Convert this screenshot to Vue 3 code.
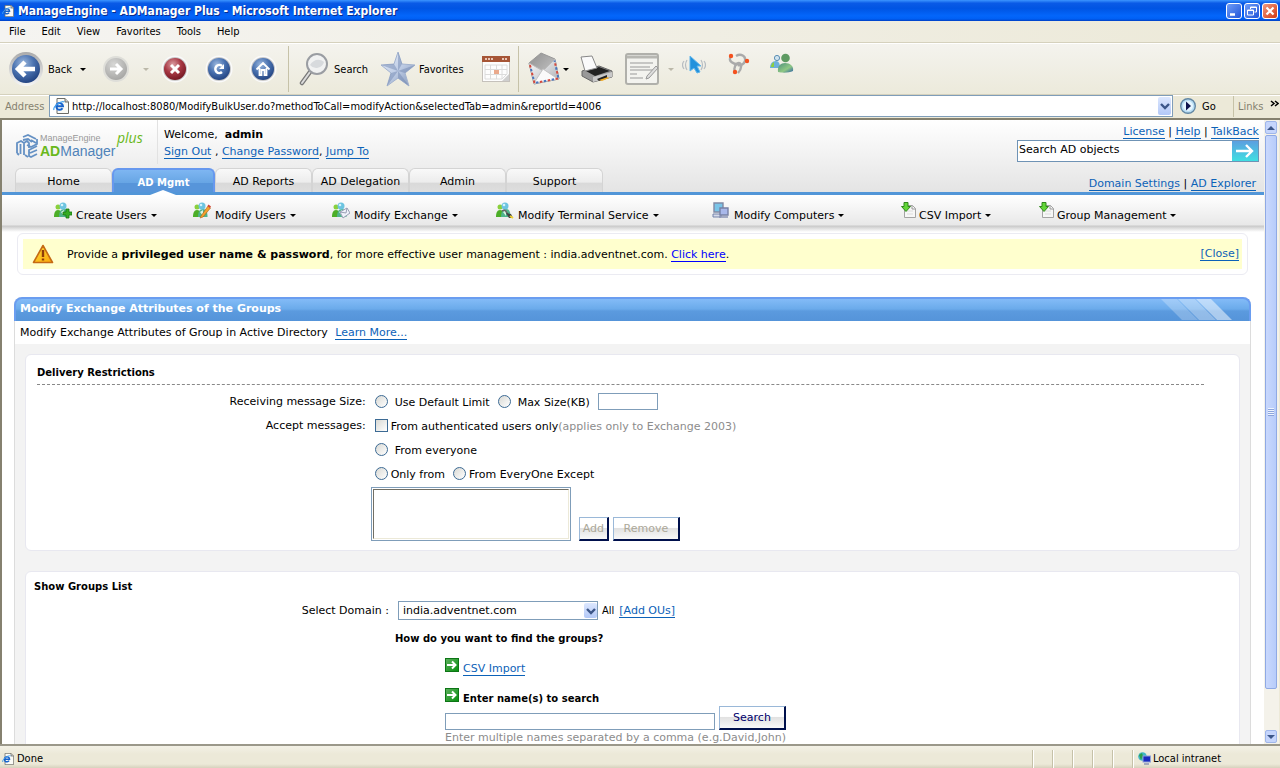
<script setup>
import { ref } from 'vue'

const menus = ['File', 'Edit', 'View', 'Favorites', 'Tools', 'Help']
const tabs = ['Home', 'AD Mgmt', 'AD Reports', 'AD Delegation', 'Admin', 'Support']
const activeTab = ref('AD Mgmt')
const navItems = [
  { label: 'Create Users', icon: 'plus' },
  { label: 'Modify Users', icon: 'pencil' },
  { label: 'Modify Exchange', icon: 'mail' },
  { label: 'Modify Terminal Service', icon: 'plug' },
  { label: 'Modify Computers', icon: 'computer' },
  { label: 'CSV Import', icon: 'import' },
  { label: 'Group Management', icon: 'import' }
]
const showNotice = ref(true)
const address = ref('http://localhost:8080/ModifyBulkUser.do?methodToCall=modifyAction&selectedTab=admin&reportId=4006')
const adSearch = ref('Search AD objects')
const sizeLimit = ref('')
const maxSize = ref('')
const authOnly = ref(false)
const acceptFrom = ref('')
const domain = ref('india.adventnet.com')
const names = ref('')
</script>

<template>
  <div class="window">
    <!-- shared gradients and symbols -->
    <svg class="sprite" aria-hidden="true">
      <defs>
        <radialGradient id="gBlue" cx=".4" cy=".3" r=".75"><stop offset="0" stop-color="#9db9de" /><stop offset=".5" stop-color="#4a72b0" /><stop offset="1" stop-color="#1f3f7d" /></radialGradient>
        <radialGradient id="gRed" cx=".4" cy=".3" r=".75"><stop offset="0" stop-color="#dba0a4" /><stop offset=".5" stop-color="#a83844" /><stop offset="1" stop-color="#701520" /></radialGradient>
        <radialGradient id="gGrey" cx=".4" cy=".3" r=".75"><stop offset="0" stop-color="#d8d8d6" /><stop offset="1" stop-color="#a4a4a2" /></radialGradient>
        <linearGradient id="gRing" x1="0" y1="0" x2="0" y2="1"><stop offset="0" stop-color="#aaa" /><stop offset="1" stop-color="#f6f6f6" /></linearGradient>
        <linearGradient id="gStar" x1="0" y1="0" x2="1" y2="1"><stop offset="0" stop-color="#eaf0fb" /><stop offset=".5" stop-color="#c0cee6" /><stop offset="1" stop-color="#7f93b6" /></linearGradient>
        <linearGradient id="gSilver" x1="0" y1="0" x2="1" y2="1"><stop offset="0" stop-color="#fff" /><stop offset="1" stop-color="#aaadb2" /></linearGradient>
        <linearGradient id="gFlap" x1="0" y1="0" x2="1" y2="1"><stop offset="0" stop-color="#8f8f8f" /><stop offset="1" stop-color="#d4d4d4" /></linearGradient>
        <linearGradient id="gWarn" x1="0" y1="0" x2="1" y2="1"><stop offset="0" stop-color="#ffe13d" /><stop offset="1" stop-color="#f9a408" /></linearGradient>
        <linearGradient id="gGreen" x1="0" y1="0" x2="1" y2="1"><stop offset="0" stop-color="#5cae5c" /><stop offset="1" stop-color="#089010" /></linearGradient>
        <linearGradient id="gMsn" x1="0" y1="0" x2="1" y2="1"><stop offset="0" stop-color="#4f8f7c" /><stop offset=".6" stop-color="#8fc884" /><stop offset="1" stop-color="#2a5fa5" /></linearGradient>
      </defs>
      <symbol id="ie" viewBox="0 0 16 16">
        <path d="M4 .5h8l3.500 3.500v11.500H4z" fill="#fbfbf6" stroke="#6c6c66" />
        <path d="M12 .5V4h3.500" fill="#ccc" stroke="#6c6c66" />
        <path d="M9.500 10.200A3.400 3.400 0 1 1 10 8.200H3.500" fill="none" stroke="#1763cc" stroke-width="2" />
        <path d="M1 12C-.5 9 8 2 11.500 4" fill="none" stroke="#45a2ee" stroke-width="1.200" />
      </symbol>
      <symbol id="people" viewBox="0 0 18 17">
        <circle cx="4" cy="5" r="2.500" fill="#8ad03c" /><path d="M0 15c0-4 1-7 4-7s5 3 5 7z" fill="#4cae27" />
        <path d="M5 15c0-5 1.500-8 5-8s4.500 3 4.500 8z" fill="#4fb48c" />
        <circle cx="9" cy="4" r="3.500" fill="#6cc4e0" /><circle cx="8" cy="3" r="1.300" fill="#d4f3fb" /><path d="M7 10l3-2v6z" fill="#d9f6e4" />
      </symbol>
      <symbol id="go-arrow" viewBox="0 0 14 14">
        <rect width="14" height="14" fill="#0c7515" /><rect x="1" y="1" width="12" height="12" fill="url(#gGreen)" />
        <path d="M2 7h8M7 3.500L10.500 7 7 10.500" fill="none" stroke="#fff" stroke-width="2" />
      </symbol>
      <symbol id="chev" viewBox="0 0 10 8"><path d="M1 2l4 4 4-4" fill="none" stroke="#3c5688" stroke-width="2.400" /></symbol>
    </svg>

    <header class="titlebar">
      <svg class="title-icon"><use href="#ie" /></svg>
      <h1>ManageEngine - ADManager Plus - Microsoft Internet Explorer</h1>
      <div class="win-buttons">
        <button type="button" aria-label="Minimize"><svg viewBox="0 0 14 14"><path d="M3 10.500h5" stroke="#fff" stroke-width="2.500" /></svg></button>
        <button type="button" aria-label="Restore"><svg viewBox="0 0 14 14"><path d="M5.500 5V3h6v5h-2M2.500 6h6v5h-6zM2.500 6.500h6M5.500 3.500h6" fill="none" stroke="#fff" /></svg></button>
        <button type="button" class="close" aria-label="Close"><svg viewBox="0 0 14 14"><path d="M3.500 3.500l7 7M10.500 3.500l-7 7" stroke="#fff" stroke-width="2.200" /></svg></button>
      </div>
    </header>

    <nav class="menubar">
      <button v-for="m in menus" :key="m" type="button">{{ m }}</button>
    </nav>

    <div class="toolbar">
      <div class="group nav-group">
        <button type="button" class="tool back">
          <svg width="36" height="36" viewBox="0 0 36 36">
            <circle cx="18" cy="18" r="17" fill="url(#gRing)" /><circle cx="18" cy="18" r="14" fill="url(#gBlue)" />
            <path d="M17 11l-7 7 7 7M11 18h16" fill="none" stroke="#fff" stroke-width="4.500" />
          </svg>
          Back<span class="caret"></span>
        </button>
        <button type="button" class="tool forward" aria-label="Forward">
          <svg width="28" height="28" viewBox="0 0 28 28">
            <circle cx="14" cy="14" r="13" fill="#deded9" /><circle cx="14" cy="14" r="11" fill="url(#gGrey)" />
            <path d="M14 9l5 5-5 5M19 14H8" fill="none" stroke="#fff" stroke-width="3" />
          </svg>
          <span class="caret dim"></span>
        </button>
        <button type="button" class="tool" aria-label="Stop">
          <svg width="28" height="28" viewBox="0 0 28 28">
            <circle cx="14" cy="14" r="13.500" fill="#fafafa" /><circle cx="14" cy="14" r="12" fill="#c9c9c9" /><circle cx="14" cy="14" r="11" fill="url(#gRed)" />
            <path d="M10 10l8 8M18 10l-8 8" stroke="#fff" stroke-width="3" />
          </svg>
        </button>
        <button type="button" class="tool" aria-label="Refresh">
          <svg width="28" height="28" viewBox="0 0 28 28">
            <circle cx="14" cy="14" r="13.500" fill="#fafafa" /><circle cx="14" cy="14" r="12" fill="#c9c9c9" /><circle cx="14" cy="14" r="11" fill="url(#gBlue)" />
            <path d="M17 17a4 4 0 1 1 0-6" fill="none" stroke="#fff" stroke-width="2.500" /><path d="M19 9v5h-5z" fill="#fff" />
          </svg>
        </button>
        <button type="button" class="tool" aria-label="Home">
          <svg width="28" height="28" viewBox="0 0 28 28">
            <circle cx="14" cy="14" r="13.500" fill="#fafafa" /><circle cx="14" cy="14" r="12" fill="#c9c9c9" /><circle cx="14" cy="14" r="11" fill="url(#gBlue)" />
            <path d="M7.500 14.500L14 8l6.500 6.500M10.500 13v7h2v-5h3v5h2v-7" fill="none" stroke="#fff" stroke-width="1.800" />
          </svg>
        </button>
      </div>
      <div class="group search-group">
        <button type="button" class="tool">
          <svg width="32" height="34" viewBox="0 0 32 34">
            <path d="M11 20L3 31" stroke="#777" stroke-width="4.500" stroke-linecap="round" /><path d="M11 20L3 31" stroke="#ddd" stroke-width="2" stroke-linecap="round" />
            <circle cx="18" cy="12" r="10" fill="#f1f2f2" stroke="#9a9da2" stroke-width="2" /><path d="M11 13c3-5 9-7 14-3a8 8 0 0 1-14 3" fill="#d7dadd" />
          </svg>
          Search
        </button>
        <button type="button" class="tool">
          <svg width="36" height="36" viewBox="0 0 36 36">
            <path d="M18 1l4 12 13 1-10 8 4 13-11-8-11 8 4-13L1 14l13-1z" fill="url(#gStar)" stroke="#a3b3cf" />
            <path d="M18 1v19l4-7zM35 14l-17 6 7 2zM29 35L18 20v7zM7 35l11-15-7 2zM1 14l17 6-4-7z" fill="#6d83ac" opacity=".45" />
          </svg>
          Favorites
        </button>
        <button type="button" class="tool calendar" aria-label="History">
          <svg width="28" height="28" viewBox="0 0 28 28">
            <rect x=".5" y="1.500" width="27" height="25" fill="#fdfdfd" stroke="#c5c1bb" /><rect y="1" width="28" height="6" fill="#a65536" />
            <path d="M3 4h9M20 4h5" stroke="#e8c4b4" stroke-width="2" stroke-dasharray="2 1" />
            <path d="M3 10h22v9l-5 5H3zM3 14.500h22M3 19.500h22M8.500 10v14M14.500 10v14M20 10v14" fill="none" stroke="#dcdcdc" />
            <rect x="12" y="15" width="5" height="4" fill="#eaa98c" /><path d="M20 26l7-7v7z" fill="#cfcfcf" />
          </svg>
        </button>
      </div>
      <div class="group mail-group">
        <button type="button" class="tool mail" aria-label="Mail">
          <svg width="32" height="34" viewBox="0 0 32 34">
            <path d="M1 11L13 1l14 6 4 20L6 32z" fill="url(#gFlap)" stroke="#999" />
            <path d="M1 11l14 8L27 7l4 20-25 5z" fill="url(#gSilver)" stroke="#bbb" /><path d="M6 31l9-14 15 10" fill="#fafafa" stroke="#c4c4c4" />
            <path d="M2 13l4.500 18 24-4.500-4-18" fill="none" stroke="#d6483c" stroke-width="2" stroke-dasharray="2.500 5.500" />
            <path d="M2 13l4.500 18 24-4.500-4-18" fill="none" stroke="#4a76bd" stroke-width="2" stroke-dasharray="2.500 5.500" stroke-dashoffset="-4" />
          </svg>
          <span class="caret"></span>
        </button>
        <button type="button" class="tool print" aria-label="Print">
          <svg width="34" height="28" viewBox="0 0 34 28">
            <path d="M2 16l17-5 13 5v6l-19 5-11-6z" fill="#999" stroke="#666" /><path d="M6 16l13-4 11 4-15 5z" fill="#222" />
            <path d="M1 2l11-1 5 12-12 3z" fill="#fafafa" stroke="#888" />
            <path d="M13 22v5l19-5v-5z" fill="#c9c9c9" /><path d="M17 24l10-4v3l-8 3z" fill="#222" /><path d="M19 25l9-3 1 1-7 3z" fill="#f2ab22" />
          </svg>
        </button>
        <button type="button" class="tool edit" aria-label="Edit">
          <svg width="34" height="32" viewBox="0 0 34 32">
            <rect x="1" y="1" width="32" height="30" rx="2" fill="#f3f3ef" stroke="#b0b0ab" stroke-width="2" /><path d="M2 4h30" stroke="#b7b7b2" stroke-width="3" />
            <path d="M5 10h23M5 14h20M5 17h23M5 21h7M5 25h13" stroke="#999" stroke-width="1.200" /><path d="M33 15L24 25l-3 1 1-3 9-10z" fill="#ddd" stroke="#999" />
          </svg>
          <span class="caret dim"></span>
        </button>
        <div class="addons">
          <button type="button" class="tool" aria-label="Web assistant">
            <svg width="24" height="22" viewBox="0 0 24 22">
              <path d="M5 7q-3 5 0 10M2 8q-3 4 0 8M19 7q3 5 0 10M22 8q3 4 0 8" fill="none" stroke="#b7bdc2" stroke-width="1.200" />
              <path d="M8 3v15l4-3 3 5 3-1-3-6h4z" fill="#2291dc" stroke="#5fb5eb" />
            </svg>
          </button>
          <button type="button" class="tool" aria-label="Research">
            <svg width="24" height="22" viewBox="0 0 24 22">
              <g fill="none" stroke="#aaa" stroke-width="2.400">
                <path d="M5 3c-4 5 3 9 9 8" /><path d="M10 3c5-3 10 0 9 5-1 3-4 5-7 4" /><path d="M9 19c-2-4 1-9 4-9s3 6-1 10" />
              </g>
              <circle cx="5" cy="3" r="2.200" fill="#f4511e" /><circle cx="21" cy="8" r="2.200" fill="#f4511e" /><circle cx="9" cy="19" r="2.200" fill="#f4511e" />
            </svg>
          </button>
          <button type="button" class="tool" aria-label="Messenger">
            <svg width="24" height="22" viewBox="0 0 24 22">
              <circle cx="7" cy="5" r="2.600" fill="#cfe3ef" stroke="#5c8fb4" /><path d="M0 15c0-4 2-7 6-7 3 0 4 3 4 7z" fill="#6cb0dc" /><path d="M1 14c0-2 1-4 3-5v5z" fill="#8fcf3f" />
              <circle cx="15.500" cy="5" r="4.300" fill="#5e9a62" /><path d="M8 19c-1-6 3-9 7-9 5 0 9 3 8 8-4 2-11 2-15 1z" fill="url(#gMsn)" />
            </svg>
          </button>
        </div>
      </div>
    </div>

    <div class="addressbar">
      <label for="address">Address</label>
      <div class="address-box">
        <svg width="16" height="16"><use href="#ie" /></svg>
        <input id="address" v-model="address" type="text" />
        <button type="button" class="xp-drop" aria-label="Show addresses"><svg width="10" height="8"><use href="#chev" /></svg></button>
      </div>
      <button type="button" class="go">
        <svg width="16" height="16" viewBox="0 0 16 16"><circle cx="8" cy="8" r="7.300" fill="#b9def5" stroke="#6287a4" stroke-width="1.400" /><circle cx="8" cy="8" r="5" fill="#e6f6ff" /><path d="M6 3.500L11 8l-5 4.500z" fill="#10154f" /></svg>
        Go
      </button>
      <div class="links">Links <svg width="9" height="8" viewBox="0 0 9 8"><path d="M1 1l3 2.500L1 6M5 1l3 2.500L5 6" fill="none" stroke="#000" stroke-width="1.500" /></svg></div>
    </div>

    <div class="viewport">
      <main class="page">
        <div class="page-head">
          <div class="logo">
            <svg width="23" height="25" viewBox="0 0 23 25">
              <g fill="none" stroke="#6591c4" stroke-width="1.800">
                <path d="M1 19V9l4-2 3 2v12M4.500 10v10M8 9l3-2 2 2v5" />
                <path d="M7 3l5-2 8 4M7 6l5-1 4 3M21 5v5l-6 3-4-2M20 9l-5-3" />
                <path d="M21 12l-8 4v6l2 1 6-3M14 19l7-3M9 21l3 2M1 19l2 2" />
              </g>
            </svg>
            <div class="logo-text">
              <small>ManageEngine</small>
              <div><b>AD</b><span>Manager</span></div>
            </div>
            <em>plus</em>
          </div>
          <div class="welcome">
            <p>Welcome, &nbsp;<b>admin</b></p>
            <p><a href="#">Sign Out</a> , <a href="#">Change Password</a>, <a href="#">Jump To</a></p>
          </div>
          <div class="head-right">
            <p class="right-links"><a href="#">License</a> | <a href="#">Help</a> | <a href="#">TalkBack</a></p>
            <div class="ad-search">
              <input v-model="adSearch" type="text" aria-label="Search AD objects" />
              <button type="button" aria-label="Search"><svg width="18" height="14" viewBox="0 0 18 14"><path d="M0 7h15M10 1l6 6-6 6" fill="none" stroke="#fff" stroke-width="2.400" /></svg></button>
            </div>
            <p class="right-links lower"><a href="#">Domain Settings</a> | <a href="#">AD Explorer</a></p>
          </div>
        </div>
        <div class="tabs">
          <button v-for="t in tabs" :key="t" type="button" :class="{ active: t === activeTab }" @click="activeTab = t">{{ t }}</button>
        </div>
        <nav class="subnav">
          <a v-for="n in navItems" :key="n.label" href="#">
            <svg width="18" height="17" viewBox="0 0 18 17">
              <use v-if="n.icon !== 'computer' && n.icon !== 'import'" href="#people" width="18" height="17" />
              <path v-if="n.icon === 'plus'" d="M12 7h3v3h3v3h-3v3h-3v-3H9v-3h3z" fill="#35ac23" stroke="#187610" stroke-width=".8" />
              <g v-if="n.icon === 'pencil'"><path d="M8 14l7-10 2.500 2L10 15l-3 1z" fill="#f5a12d" stroke="#a96213" stroke-width=".6" /><path d="M14.500 4l1-1.500 2.500 2L17 6z" fill="#d14235" /></g>
              <g v-if="n.icon === 'mail'"><path d="M8 10l7-4 3 5-7 5z" fill="#f0f2fa" stroke="#999fb5" /><path d="M8 10l6 1 1-5" fill="none" stroke="#999fb5" /></g>
              <g v-if="n.icon === 'plug'"><path d="M6 9c5-3 4 4 7 4" fill="none" stroke="#666" stroke-width="1.600" /><path d="M10 11l5 1 2 4h-4z" fill="#444" /><path d="M14 14l3 2" stroke="#f1d12c" stroke-width="2" /></g>
              <g v-if="n.icon === 'computer'"><path d="M2 1h9v9H2z" fill="#79c4e8" stroke="#8089a4" stroke-width="1.400" /><path d="M1 12h8v3H1z" fill="#d6dbea" stroke="#7583aa" /><path d="M8 6h8v7H8z" fill="#a9b8ea" stroke="#7780a5" stroke-width="1.400" /><path d="M7 15h9" stroke="#8a93b5" stroke-width="1.500" /></g>
              <g v-if="n.icon === 'import'"><path d="M3.500 3.500h8l3 3v9h-11z" fill="#f7f7f7" stroke="#a4a4a4" /><path d="M11 3.500v3.500h3.500" fill="none" stroke="#999" /><path d="M6 9h6M6 12h6" stroke="#ddd" /><path d="M3 .5h4v4h2.500L5 9.500.5 4.500H3z" fill="#62d637" stroke="#31871c" /></g>
            </svg>
            <span>{{ n.label }}</span><i class="caret"></i>
          </a>
        </nav>

        <div v-if="showNotice" class="notice">
          <div class="notice-body">
            <svg width="22" height="20" viewBox="0 0 22 20"><path d="M11 1.500L20.500 18.500h-19z" fill="url(#gWarn)" stroke="#c56a14" stroke-width="1.600" stroke-linejoin="round" /><path d="M11 6v7M11 14.500v2" stroke="#8f3c08" stroke-width="2.400" /></svg>
            <p>Provide a <b>privileged user name &amp; password</b>, for more effective user management : india.adventnet.com. <a class="plain" href="#">Click here</a>.</p>
            <a href="#" @click.prevent="showNotice = false">[Close]</a>
          </div>
        </div>

        <section class="panel">
          <div class="panel-title">
            <h2>Modify Exchange Attributes of the Groups</h2>
            <svg width="72" height="21" viewBox="0 0 72 21"><path d="M0 0h16l21 21H21z" fill="#fff" opacity=".25" /><path d="M17 0h17l21 21H38z" fill="#fff" opacity=".35" /><path d="M35 0h15l21 21H56z" fill="#fff" opacity=".5" /></svg>
          </div>
          <p class="panel-intro">Modify Exchange Attributes of Group in Active Directory <a href="#">Learn More...</a></p>

          <div class="card restrictions">
            <h3>Delivery Restrictions</h3>
            <div class="form-row">
              <span class="name">Receiving message Size:</span>
              <div class="field wide">
                <input id="def" v-model="sizeLimit" type="radio" value="default" /><label for="def">Use Default Limit</label>
                <input id="max" v-model="sizeLimit" type="radio" value="max" /><label for="max">Max Size(KB)</label>
                <input v-model="maxSize" class="text size" type="text" aria-label="Max size in KB" />
              </div>
            </div>
            <div class="form-row">
              <span class="name">Accept messages:</span>
              <div class="field">
                <input id="auth" v-model="authOnly" type="checkbox" /><label for="auth">From authenticated users only<span class="hint">(applies only to Exchange 2003)</span></label>
              </div>
            </div>
            <div class="form-row">
              <div class="field wide"><input id="every" v-model="acceptFrom" type="radio" value="everyone" /><label for="every">From everyone</label></div>
            </div>
            <div class="form-row">
              <div class="field">
                <input id="only" v-model="acceptFrom" type="radio" value="only" /><label for="only">Only from</label>
                <input id="except" v-model="acceptFrom" type="radio" value="except" /><label for="except">From EveryOne Except</label>
              </div>
            </div>
            <div class="form-row list-row">
              <div class="list-field">
                <div class="list-frame"><select multiple aria-label="Senders"></select></div>
                <button type="button" class="btn" disabled>Add</button>
                <button type="button" class="btn big" disabled>Remove</button>
              </div>
            </div>
          </div>

          <div class="card groups">
            <h3>Show Groups List</h3>
            <div class="domain-row">
              <label for="domain">Select Domain :</label>
              <div class="select-box">
                <select id="domain" v-model="domain"><option>india.adventnet.com</option></select>
                <span class="xp-drop"><svg width="10" height="8"><use href="#chev" /></svg></span>
              </div>
              <span class="all">All</span>
              <a href="#">[Add OUs]</a>
            </div>
            <div class="find">
              <h4>How do you want to find the groups?</h4>
              <div class="option"><svg width="14" height="14"><use href="#go-arrow" /></svg><a href="#">CSV Import</a></div>
              <div class="option"><svg width="14" height="14"><use href="#go-arrow" /></svg><label for="names">Enter name(s) to search</label></div>
              <div class="search-row">
                <input id="names" v-model="names" class="text" type="text" />
                <button type="button" class="btn big">Search</button>
              </div>
              <p class="hint">Enter multiple names separated by a comma (e.g.David,John)</p>
            </div>
          </div>
        </section>
      </main>
      <div class="scrollbar">
        <button type="button" class="up" aria-label="Scroll up"><svg width="8" height="6" viewBox="0 0 8 6"><path d="M0 5l4-4 4 4z" fill="#3c5688" /></svg></button>
        <div class="thumb"><i></i></div>
        <button type="button" aria-label="Scroll down"><svg width="8" height="6" viewBox="0 0 8 6"><path d="M0 1l4 4 4-4z" fill="#3c5688" /></svg></button>
      </div>
    </div>

    <footer class="statusbar">
      <svg width="12" height="12"><use href="#ie" /></svg>
      <span class="status">Done</span>
      <i v-for="k in 5" :key="k" class="cell"></i>
      <div class="zone">
        <svg width="13" height="13" viewBox="0 0 13 13"><circle cx="4.500" cy="4.500" r="4.300" fill="#3fb8c4" /><path d="M1 3l3-2 1 3-2 4z" fill="#2f9e4a" /><rect x="5" y="4" width="7.500" height="6" fill="#1a2bc0" stroke="#8ea0d8" /><path d="M6 12h5" stroke="#8a93b5" stroke-width="1.500" /></svg>
        Local intranet
      </div>
    </footer>
  </div>
</template>

<style>
body {
  margin: 0;
}
</style>

<style scoped>
* {
  box-sizing: border-box;
}
.window {
  display: flex;
  flex-direction: column;
  height: 100vh;
  overflow: hidden;
  background: #ece9d8;
  color: #000;
  font-family: "DejaVu Sans Condensed", "DejaVu Sans", sans-serif;
  font-size: 11px;
}
.sprite {
  position: absolute;
  width: 0;
  height: 0;
}
svg {
  flex: none;
  display: block;
}
p, h1, h2, h3, h4 {
  margin: 0;
}
button, input, select {
  font: inherit;
  color: inherit;
  margin: 0;
  padding: 0;
}
button {
  background: none;
  border: 0;
}
.caret {
  display: inline-block;
  border: 3px solid transparent;
  border-top-color: #000;
  border-bottom: 0;
}
.caret.dim {
  border-top-color: #bbb8a9;
}

/* browser frame */
.titlebar {
  display: flex;
  align-items: center;
  height: 21px;
  padding: 0 2px;
  background: linear-gradient(#3c95ff 0, #0a5ae6 15%, #0054e3 40%, #0366fb 75%, #0060f5 90%, #003fc4);
}
.title-icon {
  width: 12px;
  height: 12px;
}
.titlebar h1 {
  flex: 1;
  margin-left: 4px;
  color: #fff;
  font-size: 12px;
  line-height: 20px;
  text-shadow: 1px 1px #0a2c8c;
}
.win-buttons {
  display: flex;
  gap: 2px;
}
.win-buttons button {
  width: 16px;
  height: 16px;
  border: 1px solid #fff;
  border-radius: 3px;
  background: linear-gradient(135deg, #6f9df8, #2155d9);
}
.win-buttons .close {
  background: linear-gradient(135deg, #f09a80, #d33a12);
}
.menubar {
  display: flex;
  gap: 16px;
  height: 22px;
  padding: 0 9px;
  border-bottom: 1px solid #d5d1bd;
  background: linear-gradient(90deg, #f5f4f1, #ece9d8);
}
.toolbar {
  display: flex;
  height: 52px;
  border-top: 1px solid #fff;
  border-bottom: 1px solid #d5d1bd;
  background: linear-gradient(#f4f3ee, #eceadb);
}
.group {
  display: flex;
  align-items: center;
  margin: 2px 0;
  border-right: 1px solid #c6c2a8;
}
.group:last-child {
  border: 0;
}
.tool {
  display: flex;
  align-items: center;
  gap: 3px;
}
.nav-group {
  width: 289px;
  gap: 16px;
  padding-left: 8px;
}
.nav-group .back {
  gap: 4px;
}
.back .caret {
  margin-left: 4px;
}
.forward {
  gap: 13px;
  margin-right: -4px;
}
.search-group {
  width: 230px;
  padding-left: 10px;
  gap: 12px;
}
.calendar {
  margin-left: 6px;
}
.mail-group {
  padding-left: 9px;
  gap: 11px;
}
.edit {
  gap: 9px;
}
.addons {
  display: flex;
  gap: 20px;
  margin: 0 0 10px -3px;
}
.addressbar {
  display: flex;
  align-items: center;
  height: 25px;
  padding-bottom: 2px;
  border-top: 1px solid #fff;
  border-bottom: 2px solid #85816f;
}
.addressbar > label {
  width: 49px;
  padding-left: 5px;
  color: #85816f;
}
.address-box {
  display: flex;
  flex: 1;
  align-items: center;
  gap: 3px;
  height: 22px;
  padding: 0 1px 0 3px;
  border: 1px solid #7f9db9;
  background: #fff;
}
.address-box input {
  flex: 1;
  min-width: 0;
  border: 0;
  background: none;
  outline: 0;
}
.xp-drop {
  display: flex;
  align-items: center;
  justify-content: center;
  width: 13px;
  height: 18px;
  border-radius: 2px;
  background: linear-gradient(#dce7fe, #b3c8f7);
}
.go {
  display: flex;
  align-items: center;
  gap: 6px;
  width: 60px;
  padding-left: 7px;
}
.links {
  display: flex;
  justify-content: space-between;
  width: 47px;
  padding: 4px 1px 4px 4px;
  border-left: 1px solid #c6c2a8;
  color: #85816f;
}

/* page */
.viewport {
  display: flex;
  flex: 1;
  min-height: 0;
  border-left: 2px solid #85816f;
  background: #fff;
}
.page {
  flex: 1;
  min-width: 0;
  overflow: hidden;
  font-family: "DejaVu Sans", sans-serif;
}
.page a {
  color: #0c62b8;
  text-decoration: none;
  border-bottom: 1px solid #0c62b8;
}
.page .plain {
  color: #00f;
  border-color: #00f;
}
.page-head {
  display: flex;
  height: 72px;
  padding-left: 14px;
  background: linear-gradient(#fff, #e4e4e4);
}
.logo {
  display: flex;
  align-items: flex-start;
  width: 142px;
  height: 44px;
  padding-top: 14px;
  border-right: 1px solid #e2e2e2;
}
.logo-text {
  width: 77px;
  margin-left: 1px;
  color: #4f83b9;
  font: 14px/16px "Liberation Sans", sans-serif;
  white-space: nowrap;
}
.logo-text small {
  display: block;
  color: #999;
  font-size: 9px;
  line-height: 9px;
}
.logo-text b {
  color: #69b81b;
}
.logo em {
  margin-top: -5px;
  color: #69b81b;
  font: italic 14px/18px "Open Sans", sans-serif;
}
.welcome {
  flex: 1;
  padding: 6px 0 0 6px;
  line-height: 17px;
}
.head-right {
  width: 247px;
}
.right-links {
  margin-right: 5px;
  padding-top: 4px;
  line-height: 16px;
  text-align: right;
}
.right-links.lower {
  margin-right: 8px;
  padding-top: 14px;
}
.ad-search {
  display: flex;
  height: 22px;
  width: 242px;
  border: 1px solid #6f93b5;
}
.ad-search input {
  flex: 1;
  min-width: 0;
  padding: 0 0 4px 1px;
  border: 0;
  outline: 0;
}
.ad-search button {
  display: flex;
  align-items: center;
  justify-content: center;
  width: 26px;
  background: linear-gradient(#5c9fe0, #40dfe2);
}
.tabs {
  display: flex;
  height: 27px;
  margin-top: -24px;
  padding-left: 13px;
  border-bottom: 3px solid #5296d8;
}
.tabs button {
  width: 97px;
  padding-top: 2px;
  border: 1px solid #d4d4d4;
  border-bottom: 0;
  border-radius: 6px 6px 0 0;
  background: linear-gradient(#f9f9f9, #ececec 58%, #d9d9d9 60%, #dedede);
  white-space: nowrap;
}
.tabs .active {
  position: relative;
  width: 103px;
  border: 2px solid #6798ee;
  border-bottom: 0;
  background: linear-gradient(#7eb6f2, #67a5e4 58%, #5795da 60%);
  color: #fff;
  font-size: 10px;
  font-weight: bold;
}
.tabs .active::after {
  content: "";
  position: absolute;
  left: 36px;
  bottom: -3px;
  border: 13px solid transparent;
  border-top: 0;
  border-bottom: 5px solid #fff;
}
.subnav {
  display: grid;
  grid-template-columns: 139fr 139fr 164fr 216fr 189fr 138fr 225fr;
  height: 37px;
  padding: 7px 0 0 52px;
  background: linear-gradient(#fff, #e8e8e8 30px, #c9c9c9 31px, #fff);
}
.subnav a {
  display: flex;
  color: #000;
  border: 0;
  white-space: nowrap;
}
.subnav a span {
  padding-top: 7px;
  margin: 0 4px;
}
.subnav .caret {
  align-self: flex-start;
  margin-top: 12px;
}
.subnav a:nth-child(n + 6) span {
  margin-left: 0;
}
.notice {
  margin: 1px 16px 0 15px;
  padding: 5px;
  border: 1px solid #ebebf2;
  border-radius: 6px;
}
.notice-body {
  display: flex;
  align-items: center;
  height: 30px;
  padding: 0 3px 0 9px;
  background: #ffffce;
}
.notice-body p {
  flex: 1;
  margin-left: 13px;
}
.panel {
  margin: 22px 13px 0 12px;
  border: 1px solid #dcdcdc;
  border-top: 0;
  border-radius: 8px 8px 0 0;
  background: #f3f3f3;
}
.panel-title {
  display: flex;
  justify-content: space-between;
  height: 24px;
  margin: 0 -1px;
  padding: 0 16px 0 4px;
  border: 2px solid #6a9df0;
  border-bottom: 0;
  border-radius: 8px 8px 0 0;
  background: linear-gradient(#83bbf7, #6babeb 45%, #5b9ade 55%, #5594d9);
  color: #fff;
}
.panel-title h2 {
  font-size: 11px;
  line-height: 20px;
}
.panel-intro {
  padding-left: 5px;
  background: #fff;
  line-height: 23px;
}
.panel-intro a {
  margin-left: 4px;
}
.card {
  margin: 10px 10px 20px;
  border: 1px solid #e8e8f0;
  border-radius: 6px;
  background: #fff;
}
.card h3, .card h4, .option label {
  font-size: 10px;
  font-weight: bold;
}
.restrictions {
  padding: 11px 0 9px;
}
.restrictions h3 {
  margin: 0 35px 4px 11px;
  padding-bottom: 5px;
  border-bottom: 1px dashed #888;
  line-height: 13px;
}
.form-row {
  display: grid;
  grid-template-columns: 28% 1fr;
  align-items: center;
  min-height: 24px;
}
.list-row {
  padding-top: 2px;
}
.name {
  text-align: right;
}
.field, .list-field {
  grid-column: 2;
  display: flex;
  align-items: center;
  padding-left: 9px;
}
.field label {
  margin: 2px 8px 0 3px;
}
.wide label {
  margin-left: 7px;
}
input[type="radio"], input[type="checkbox"] {
  appearance: none;
  width: 13px;
  height: 13px;
  border: 1px solid #3c6a94;
  background: linear-gradient(135deg, #d9d9d4, #fff);
}
input[type="radio"] {
  border-radius: 50%;
}
input:checked {
  box-shadow: inset 0 0 0 3px #fff, inset 0 0 0 7px #3aa53a;
}
.text {
  height: 17px;
  padding: 0 2px;
  border: 1px solid #7f9db9;
  background: #fff;
}
.size {
  width: 60px;
}
.hint {
  color: #8c8c8c;
}
.list-field {
  align-items: flex-end;
  gap: 4px;
  padding-left: 5px;
}
.list-frame {
  width: 200px;
  height: 54px;
  margin-right: 4px;
  padding: 1px;
  border: 1px solid #7f9db9;
}
.list-frame select {
  display: block;
  width: 100%;
  height: 100%;
  border: 1px solid;
  border-color: #716f64 #ece9d8 #ece9d8 #716f64;
  border-radius: 0;
  background: #fff;
}
.btn {
  height: 24px;
  padding: 0 3px;
  border: 1px solid #9ab8d8;
  border-right: 2px solid #00104c;
  border-bottom: 2px solid #00104c;
  background: linear-gradient(#fff, #fff 45%, #e2e2e2 50%, #f8f8f8);
  color: #00006c;
}
.btn.big {
  width: 67px;
}
.btn:disabled {
  color: #aca899;
}
.groups {
  margin-bottom: 0;
  padding: 8px 0 20px;
}
.groups h3 {
  margin-left: 8px;
  line-height: 14px;
}
.domain-row {
  display: flex;
  align-items: center;
  padding-top: 7px;
}
.domain-row label {
  width: 363px;
  text-align: right;
}
.select-box {
  position: relative;
  width: 200px;
  margin: 0 4px 0 9px;
}
.select-box select {
  appearance: none;
  display: block;
  width: 100%;
  height: 19px;
  padding-left: 4px;
  border: 1px solid #7f9db9;
  border-radius: 0;
  background: #fff;
}
.select-box .xp-drop {
  position: absolute;
  top: 2px;
  right: 1px;
  height: 15px;
  pointer-events: none;
}
.all {
  margin-right: 5px;
  font-family: "DejaVu Sans Condensed", sans-serif;
}
.find {
  padding-left: 419px;
}
.find h4 {
  margin: 12px 0 12px -50px;
  line-height: 14px;
}
.option {
  display: flex;
  gap: 4px;
  height: 30px;
}
.option > a, .option > label {
  align-self: flex-start;
  margin-top: 5px;
  line-height: 12px;
}
.search-row {
  display: flex;
  align-items: flex-end;
  gap: 4px;
  margin-top: -12px;
}
.search-row .text {
  width: 270px;
}
.find .hint {
  line-height: 15px;
}
.scrollbar {
  display: flex;
  flex-direction: column;
  width: 16px;
  padding: 1px 2px 1px 1px;
  border-right: 1px solid #ece9d8;
  background: #f4f2ea;
}
.scrollbar button {
  display: flex;
  align-items: center;
  justify-content: center;
  height: 13px;
  border: 1px solid #9fb6ea;
  border-radius: 2px;
  background: #c5d5fc;
}
.thumb {
  display: flex;
  align-items: center;
  justify-content: center;
  height: 89%;
  margin: 1px 0 auto;
  border: 1px solid #8fa9e4;
  border-radius: 2px;
  background: linear-gradient(90deg, #c9d8fd, #b7ccfa);
}
.thumb i {
  width: 6px;
  height: 8px;
  background: repeating-linear-gradient(#eef4fe 0 1px, #8ca5dd 1px 2px);
}
.statusbar {
  display: flex;
  align-items: center;
  height: 24px;
  padding: 3px 0 0 2px;
  border-top: 2px solid #9b988a;
  background: linear-gradient(#f3f1e6, #ece9d8 8px, #ece9d8 18px, #d6d2bd);
}
.status {
  flex: 1;
  margin-left: 3px;
}
.cell {
  width: 20px;
  height: 18px;
  border-left: 1px solid #c6c2a8;
  box-shadow: inset 1px 0 #fff;
}
.zone {
  display: flex;
  align-items: center;
  gap: 2px;
  width: 148px;
  height: 18px;
  padding-left: 5px;
  border-left: 1px solid #c6c2a8;
  box-shadow: inset 1px 0 #fff;
}
</style>
